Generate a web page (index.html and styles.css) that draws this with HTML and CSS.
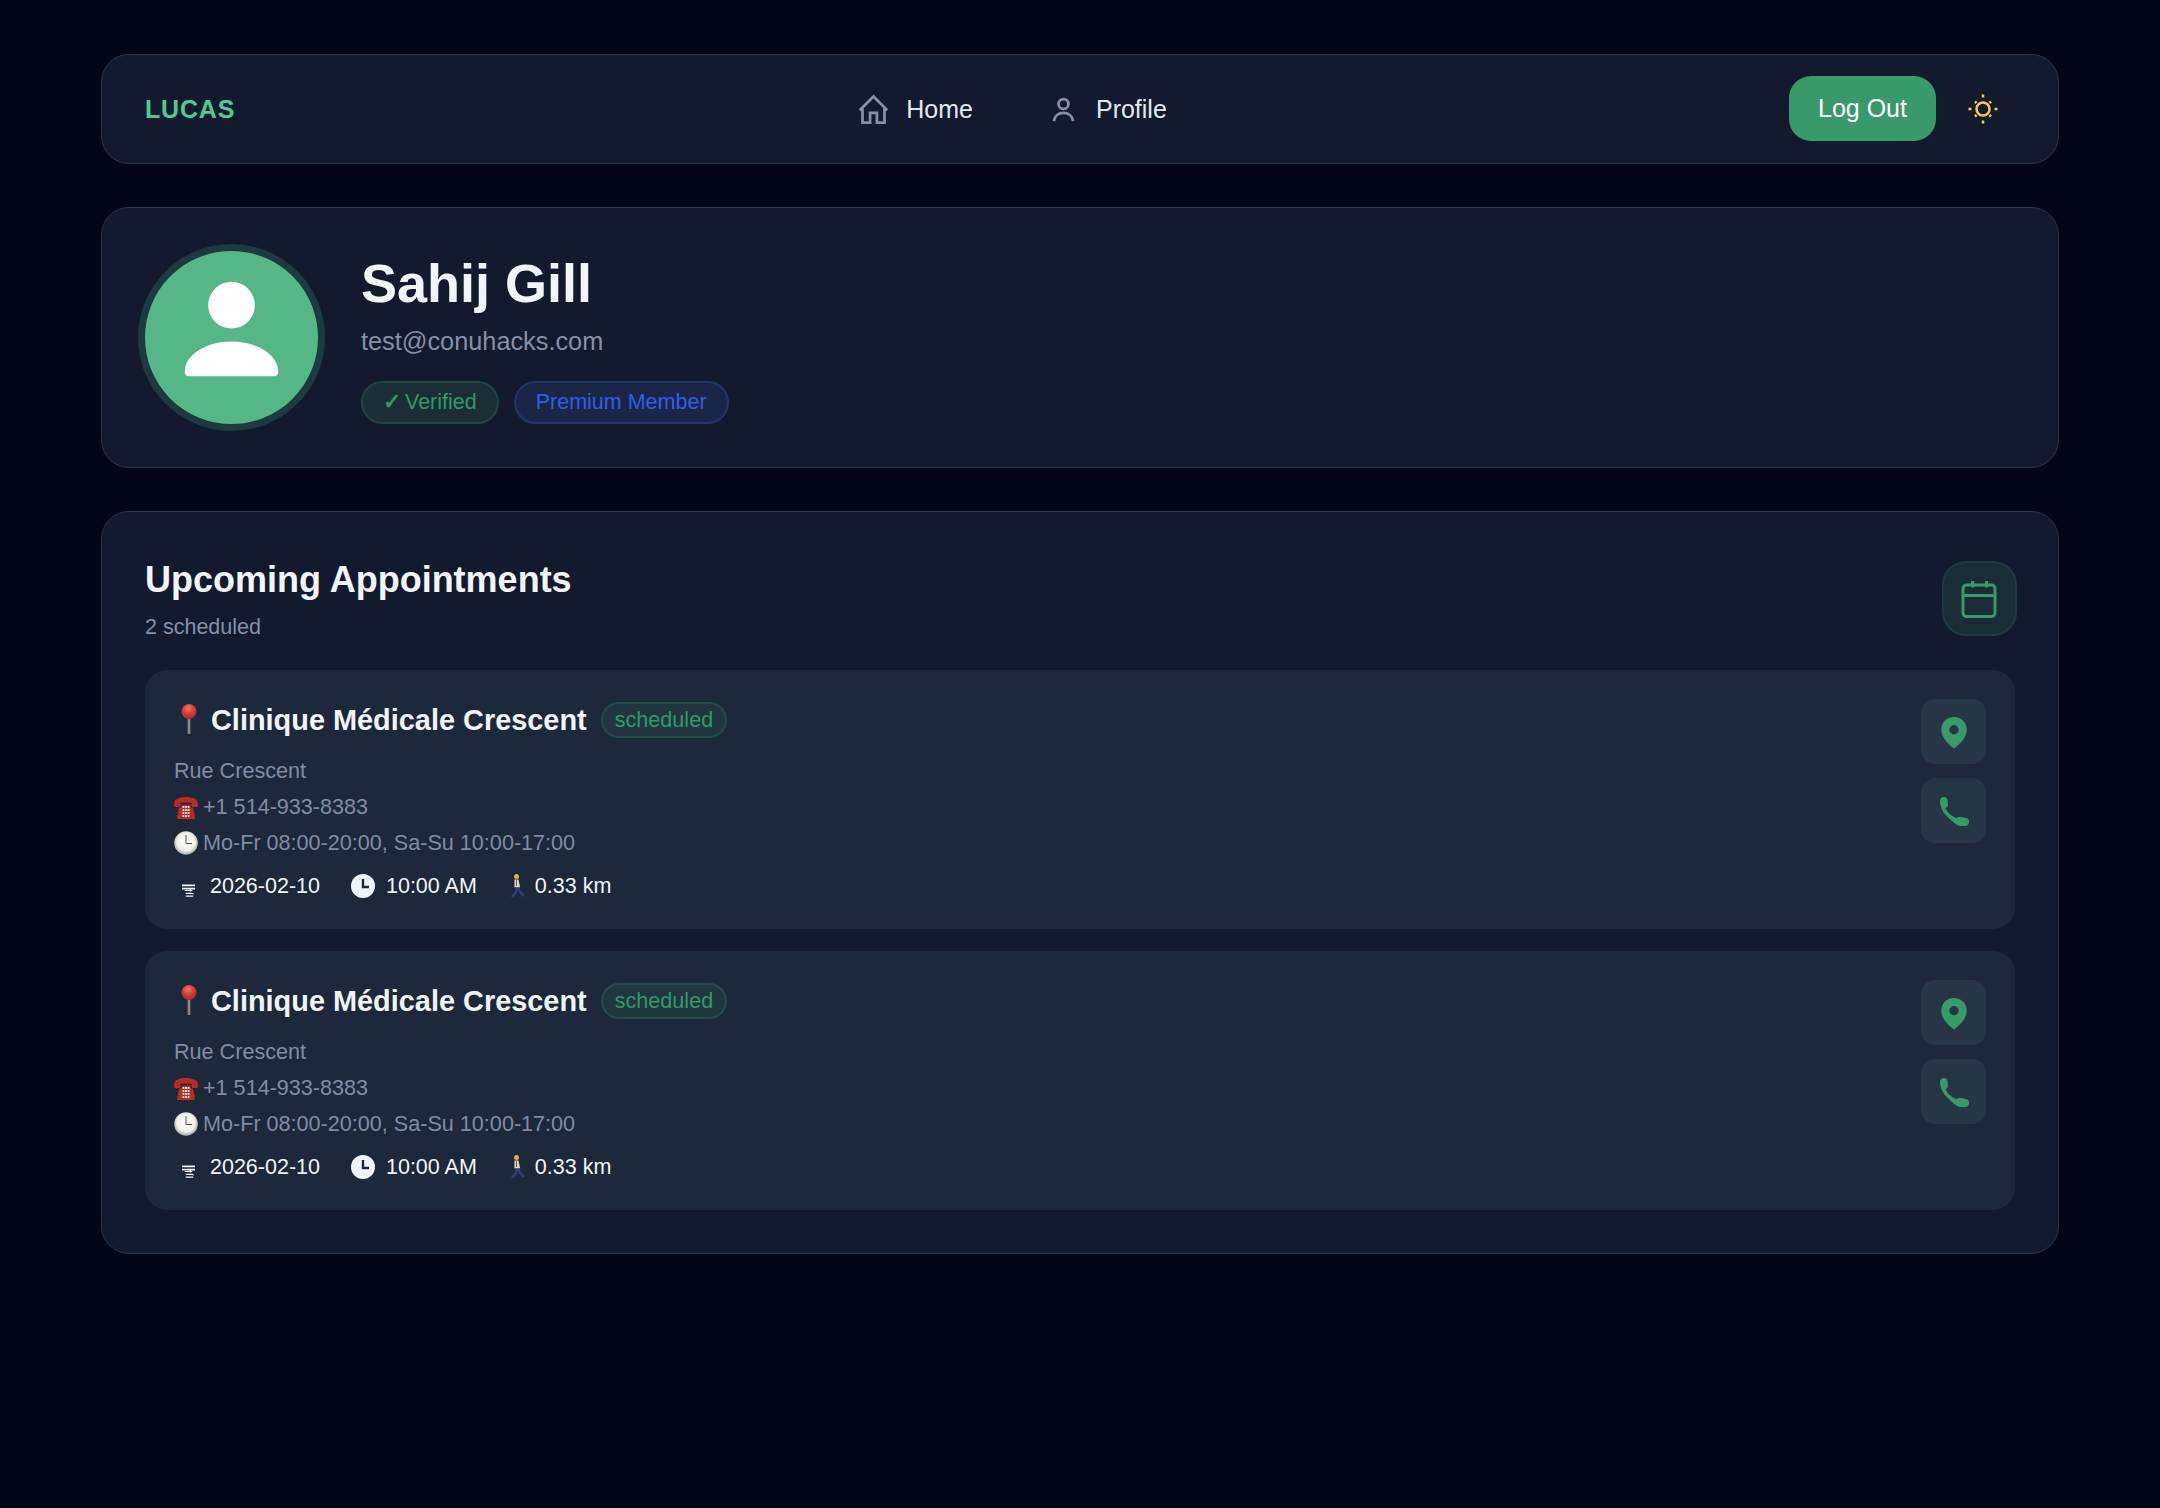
FILE: index.html
```html
<!DOCTYPE html>
<html>

<head>
    <meta charset="UTF-8">
    <title>Profile</title>
    <link rel="stylesheet" href="styles.css">
</head>

<body>

<div class="page">
    <nav class="nav">
        <a href="#" class="logo">LUCAS</a>
        <div class="nav-links">
            <a href="#" class="nav-link">
                <svg class="nav-icon" viewBox="0 0 24 24"><path d="M2 12.500 12 2.500 22 12.500M4 10.500V21.500H9.500V14.500H14.500V21.500H20V10.500"/></svg>
                Home
            </a>
            <a href="#" class="nav-link">
                <svg class="nav-icon" viewBox="0 0 24 24"><circle cx="12" cy="8" r="3.600"/><path d="M5 20.500C5.500 16.500 8.500 14.500 12 14.500S18.500 16.500 19 20.500"/></svg>
                Profile
            </a>
        </div>
        <div class="nav-right">
            <a href="#" class="logout">Log Out</a>
            <svg class="sun" viewBox="0 0 30 30"><circle cx="15" cy="15" r="6.500"/><path d="M15 .5v3M15 26.500v3M.5 15h3M26.500 15h3M7 7.500l1.500 1.500M21.500 21l1.500 1.500M7 22.500 8.500 21M21.500 9 23 7.500"/></svg>
        </div>
    </nav>

    <section class="panel profile">
        <div class="avatar">
            <svg viewBox="0 0 174 174"><circle cx="87" cy="54.500" r="23.500"/><path d="M44 126c-3 0-4-2-4-5C40 104 62 91 87 91s47 13 47 30c0 3-1 5-4 5z"/></svg>
        </div>
        <div class="profile-info">
            <h1 class="name">Sahij Gill</h1>
            <p class="email">test@conuhacks.com</p>
            <div class="tags">
                <span class="tag tag-green"><span class="check">✓</span>Verified</span>
                <span class="tag tag-blue">Premium Member</span>
            </div>
        </div>
    </section>

    <section class="panel appts">
        <div class="appts-head">
            <div>
                <h2 class="appts-title">Upcoming Appointments</h2>
                <p class="appts-count">2 scheduled</p>
            </div>
            <div class="cal-btn">
                <svg viewBox="0 0 38 38"><rect x="2" y="5" width="32" height="31.500" rx="3.500"/><path d="M2 15.500h32M11.500 1v6.500M25.500 1v6.500"/></svg>
            </div>
        </div>

        <div class="card">
            <div class="card-main">
                <div class="card-title">
                    <svg class="pin" viewBox="0 0 20 32"><defs><radialGradient id="pinHead" cx="0.45" cy="0.3" r="0.7"><stop offset="0" stop-color="#ec7a68"/><stop offset="0.5" stop-color="#d2423a"/><stop offset="1" stop-color="#a52a2a"/></radialGradient></defs><path class="pin-stem" d="M10 14v17"/><circle cx="10" cy="8.500" r="7.500" fill="url(#pinHead)"/></svg>
                    <h3>Clinique Médicale Crescent</h3>
                    <span class="status">scheduled</span>
                </div>
                <p class="line">Rue Crescent</p>
                <p class="line"><svg class="emoji" viewBox="0 0 24 24"><path class="tel" d="M0 9C0 4 5 2 12 2s12 2 12 7v1.500c0 .8-.5 1.500-1.500 1.500H19c-1 0-1.500-.7-1.500-1.500V8c-2-.8-9-.8-11 0v2.500C6.500 11.300 6 12 5 12H1.500C.5 12 0 11.300 0 10.500z"/><path class="tel" d="M3 22.500 5 12.500h2.500V9.500h9v3H19l2 10c0 .8-.5 1.500-1.500 1.500h-15C3.500 24 3 23.300 3 22.500z"/><path class="tel-keys" d="M8.500 12h1.800M11.100 12h1.800M13.700 12h1.800M8.500 15h1.800M11.100 15h1.800M13.700 15h1.800M8.500 18h1.800M11.100 18h1.800M13.700 18h1.800M8.500 21h1.800M11.100 21h1.800M13.700 21h1.800"/></svg> +1 514-933-8383</p>
                <p class="line"><svg class="emoji" viewBox="0 0 24 24"><defs><radialGradient id="clockFace" cx="0.5" cy="0.45" r="0.55"><stop offset="0" stop-color="#fff"/><stop offset="0.7" stop-color="#f1efeb"/><stop offset="1" stop-color="#a3a19d"/></radialGradient></defs><circle cx="12" cy="12" r="11.800" fill="url(#clockFace)"/><path class="clock-hand" d="M12 4v8.500H18"/></svg> Mo-Fr 08:00-20:00, Sa-Su 10:00-17:00</p>
                <div class="meta">
                    <span class="meta-item"><svg class="cal-glyph" viewBox="0 0 14 14"><path class="glyph-bar" d="M0 1h14M0 4.500h14"/><path class="glyph-thin" d="M3 6.500h8M9 4.500v3M4 9.500h7l1.500 1M4 12.500h8"/></svg>2026-02-10</span>
                    <span class="meta-item"><svg class="meta-clock" viewBox="0 0 24 24"><circle cx="12" cy="12" r="12"/><path d="M12 5v8h6"/></svg>10:00 AM</span>
                    <span class="meta-item"><svg class="walker" viewBox="0 0 16 24"><circle class="w-head" cx="6.500" cy="2.600" r="2.500"/><path class="w-shirt" d="M4.500 5.500h4l1.500 8H4.500z"/><path class="w-tie" d="M6.500 6v6"/><path class="w-legs" d="M6.500 13.500 6 18 2 23M8 13.500 10 18 14 22"/></svg>0.33 km</span>
                </div>
            </div>
            <div class="card-actions">
                <div class="action">
                    <svg class="action-pin" viewBox="0 0 24 24"><path fill-rule="evenodd" d="M12 2C6.900 2 3.500 5.700 3.500 10.500 3.500 15.500 8 20 12 23c4-3 8.500-7.500 8.500-12.500C20.500 5.700 17.100 2 12 2zm0 5.400a3.100 3.100 0 1 1 0 6.200 3.100 3.100 0 0 1 0-6.200z"/></svg>
                </div>
                <div class="action">
                    <svg class="action-phone" viewBox="0 0 30 30"><path d="M1 5C1 2 3 1 5 1c2 0 3 1 3.500 3L9 8.500c0 2-1 3-2.500 3.500C8 16 12 20 17.500 22c1-1 2.500-1.200 4.500-1l5 1c2.500.5 3 2 3 4 0 2.500-1.500 4-4 4h-5C19 30 13 26 5 17 2.500 13 1 9 1 5z"/></svg>
                </div>
            </div>
        </div>

        <div class="card">
            <div class="card-main">
                <div class="card-title">
                    <svg class="pin" viewBox="0 0 20 32"><path class="pin-stem" d="M10 14v17"/><circle cx="10" cy="8.500" r="7.500" fill="url(#pinHead)"/></svg>
                    <h3>Clinique Médicale Crescent</h3>
                    <span class="status">scheduled</span>
                </div>
                <p class="line">Rue Crescent</p>
                <p class="line"><svg class="emoji" viewBox="0 0 24 24"><path class="tel" d="M0 9C0 4 5 2 12 2s12 2 12 7v1.500c0 .8-.5 1.500-1.500 1.500H19c-1 0-1.500-.7-1.500-1.500V8c-2-.8-9-.8-11 0v2.500C6.500 11.300 6 12 5 12H1.500C.5 12 0 11.300 0 10.500z"/><path class="tel" d="M3 22.500 5 12.500h2.500V9.500h9v3H19l2 10c0 .8-.5 1.500-1.500 1.500h-15C3.500 24 3 23.300 3 22.500z"/><path class="tel-keys" d="M8.500 12h1.800M11.100 12h1.800M13.700 12h1.800M8.500 15h1.800M11.100 15h1.800M13.700 15h1.800M8.500 18h1.800M11.100 18h1.800M13.700 18h1.800M8.500 21h1.800M11.100 21h1.800M13.700 21h1.800"/></svg> +1 514-933-8383</p>
                <p class="line"><svg class="emoji" viewBox="0 0 24 24"><circle cx="12" cy="12" r="11.800" fill="url(#clockFace)"/><path class="clock-hand" d="M12 4v8.500H18"/></svg> Mo-Fr 08:00-20:00, Sa-Su 10:00-17:00</p>
                <div class="meta">
                    <span class="meta-item"><svg class="cal-glyph" viewBox="0 0 14 14"><path class="glyph-bar" d="M0 1h14M0 4.500h14"/><path class="glyph-thin" d="M3 6.500h8M9 4.500v3M4 9.500h7l1.500 1M4 12.500h8"/></svg>2026-02-10</span>
                    <span class="meta-item"><svg class="meta-clock" viewBox="0 0 24 24"><circle cx="12" cy="12" r="12"/><path d="M12 5v8h6"/></svg>10:00 AM</span>
                    <span class="meta-item"><svg class="walker" viewBox="0 0 16 24"><circle class="w-head" cx="6.500" cy="2.600" r="2.500"/><path class="w-shirt" d="M4.500 5.500h4l1.500 8H4.500z"/><path class="w-tie" d="M6.500 6v6"/><path class="w-legs" d="M6.500 13.500 6 18 2 23M8 13.500 10 18 14 22"/></svg>0.33 km</span>
                </div>
            </div>
            <div class="card-actions">
                <div class="action">
                    <svg class="action-pin" viewBox="0 0 24 24"><path fill-rule="evenodd" d="M12 2C6.900 2 3.500 5.700 3.500 10.500 3.500 15.500 8 20 12 23c4-3 8.500-7.500 8.500-12.500C20.500 5.700 17.100 2 12 2zm0 5.400a3.100 3.100 0 1 1 0 6.200 3.100 3.100 0 0 1 0-6.200z"/></svg>
                </div>
                <div class="action">
                    <svg class="action-phone" viewBox="0 0 30 30"><path d="M1 5C1 2 3 1 5 1c2 0 3 1 3.500 3L9 8.500c0 2-1 3-2.500 3.500C8 16 12 20 17.500 22c1-1 2.500-1.200 4.500-1l5 1c2.500.5 3 2 3 4 0 2.500-1.500 4-4 4h-5C19 30 13 26 5 17 2.500 13 1 9 1 5z"/></svg>
                </div>
            </div>
        </div>
    </section>
</div>

</body>

</html>
```
FILE: styles.css
```css
* {
    margin: 0;
    padding: 0;
    box-sizing: border-box;
    text-decoration: none;
}
body {
    min-height: 1508px;
    background: #020617;
    font-family: "Liberation Sans", Arial, sans-serif;
    color: #f1f5f9;
}
.page {
    padding: 54px 101px;
    display: flex;
    flex-direction: column;
    gap: 43px;
}
.panel, .nav {
    background: #141a2e;
    border: 1px solid #2d3548;
    border-radius: 28px;
}

/* nav */
.nav {
    height: 110px;
    padding: 0 43px;
    display: flex;
    align-items: center;
    justify-content: space-between;
}
.logo {
    font-size: 25px;
    font-weight: 700;
    letter-spacing: 0.8px;
    color: #4ecb94;
}
.nav-links {
    display: flex;
    gap: 74px;
}
.nav-link {
    display: flex;
    align-items: center;
    gap: 16px;
    font-size: 25px;
    color: #e2e8f0;
}
.nav-icon {
    width: 33px;
    height: 33px;
    fill: none;
    stroke: #8390a6;
    stroke-width: 2;
}
.nav-right {
    display: flex;
    align-items: center;
    gap: 32px;
    padding-right: 17px;
}
.logout {
    display: block;
    width: 147px;
    height: 65px;
    margin-top: -1px;
    line-height: 65px;
    text-align: center;
    font-size: 25px;
    color: #fff;
    background: #38996b;
    border-radius: 22px;
}
.sun {
    width: 30px;
    height: 30px;
    fill: none;
    stroke: #f8cd46;
    stroke-width: 2.5;
}

/* profile */
.profile {
    height: 261px;
    padding: 0 36px;
    display: flex;
    align-items: center;
    gap: 36px;
}
.avatar {
    width: 187px;
    height: 187px;
    flex: none;
    border: 7px solid #1d3a3f;
    border-radius: 50%;
    background: #55b788;
}
.avatar svg {
    display: block;
    width: 173px;
    height: 173px;
    fill: #fff;
}
.name {
    font-size: 54px;
    line-height: 62px;
    font-weight: 700;
}
.email {
    margin-top: 11px;
    font-size: 25.3px;
    line-height: 32px;
    color: #8390a6;
}
.tags {
    margin-top: 24px;
    display: flex;
    gap: 15px;
}
.tag {
    height: 43px;
    line-height: 39px;
    padding: 0 20px;
    font-size: 21.5px;
    border: 2px solid;
    border-radius: 22px;
}
.tag-green {
    color: #2f9968;
    background: #1b2d35;
    border-color: #21453f;
}
.tag-blue {
    color: #2f5fe6;
    background: #1a2647;
    border-color: #233766;
}
.check {
    margin-right: 4px;
    font-weight: 700;
}

/* appointments */
.appts {
    padding: 44px 43px 43px;
    display: flex;
    flex-direction: column;
    gap: 22px;
}
.appts-head {
    display: flex;
    justify-content: space-between;
    align-items: flex-start;
    height: 92px;
}
.appts-title {
    font-size: 36px;
    line-height: 48px;
    font-weight: 700;
}
.appts-count {
    margin-top: 10px;
    font-size: 21.5px;
    line-height: 26px;
    color: #8390a6;
}
.cal-btn {
    width: 75px;
    height: 75px;
    margin: 5px -2px 0 0;
    background: #1a2c35;
    border: 2px solid #21393f;
    border-radius: 24px;
    display: flex;
    align-items: center;
    justify-content: center;
}
.cal-btn svg {
    width: 38px;
    height: 38px;
    fill: none;
    stroke: #38996b;
    stroke-width: 3;
}
.card {
    height: 259px;
    padding: 29px;
    background: #1e283b;
    border-radius: 22px;
    display: flex;
    justify-content: space-between;
}
.card-title {
    display: flex;
    align-items: center;
    height: 36px;
    margin: 3px 0 15px;
}
.pin {
    width: 20px;
    height: 32px;
    margin: -3px 12px 0 5px;
}
.pin-stem {
    stroke: #8d8a86;
    stroke-width: 2.6;
}
.card-title h3 {
    font-size: 28.9px;
    font-weight: 700;
}
.status {
    margin-left: 14px;
    height: 36px;
    line-height: 32px;
    padding: 0 12px;
    font-size: 21.6px;
    color: #2f9968;
    background: #22363f;
    border: 2px solid #2a4a4a;
    border-radius: 18px;
}
.line {
    height: 36px;
    line-height: 36px;
    font-size: 21.6px;
    color: #7f8ca2;
    display: flex;
    align-items: center;
    gap: 5px;
}
.emoji {
    width: 24px;
    height: 24px;
}
.tel {
    fill: #b92c25;
}
.tel-keys {
    stroke: #f3e4dc;
    stroke-width: 1.8;
}
.clock-hand {
    fill: none;
    stroke: #55534f;
    stroke-width: 1;
}
.meta {
    margin-top: 7px;
    display: flex;
    gap: 31px;
    font-size: 21.5px;
    line-height: 36px;
    color: #f1f5f9;
}
.meta-item {
    display: flex;
    align-items: center;
    gap: 11px;
}
.cal-glyph {
    width: 13px;
    height: 14px;
    margin: 9px 4px 0 8px;
    fill: none;
    stroke: #f1f5f9;
}
.glyph-bar {
    stroke-width: 2;
}
.glyph-thin {
    stroke-width: 1.2;
}
.meta-clock {
    width: 24px;
    height: 24px;
    fill: #f1f5f9;
}
.meta-clock path {
    fill: none;
    stroke: #1e283b;
    stroke-width: 2.4;
}
.walker {
    width: 16px;
    height: 24px;
    margin: 0 -2px 0 2px;
    fill: none;
}
.w-head {
    fill: #e0ae45;
}
.w-shirt {
    fill: #e6dcb0;
}
.w-tie {
    stroke: #4a5aa0;
    stroke-width: 1;
}
.w-legs {
    stroke: #2f3d7a;
    stroke-width: 2.6;
}
.card-actions {
    display: flex;
    flex-direction: column;
    gap: 14px;
}
.action {
    width: 65px;
    height: 65px;
    background: #263645;
    border-radius: 14px;
    display: flex;
    align-items: center;
    justify-content: center;
    fill: #38996b;
}
.action-pin {
    width: 36px;
    height: 36px;
}
.action-phone {
    width: 30px;
    height: 30px;
}
```
